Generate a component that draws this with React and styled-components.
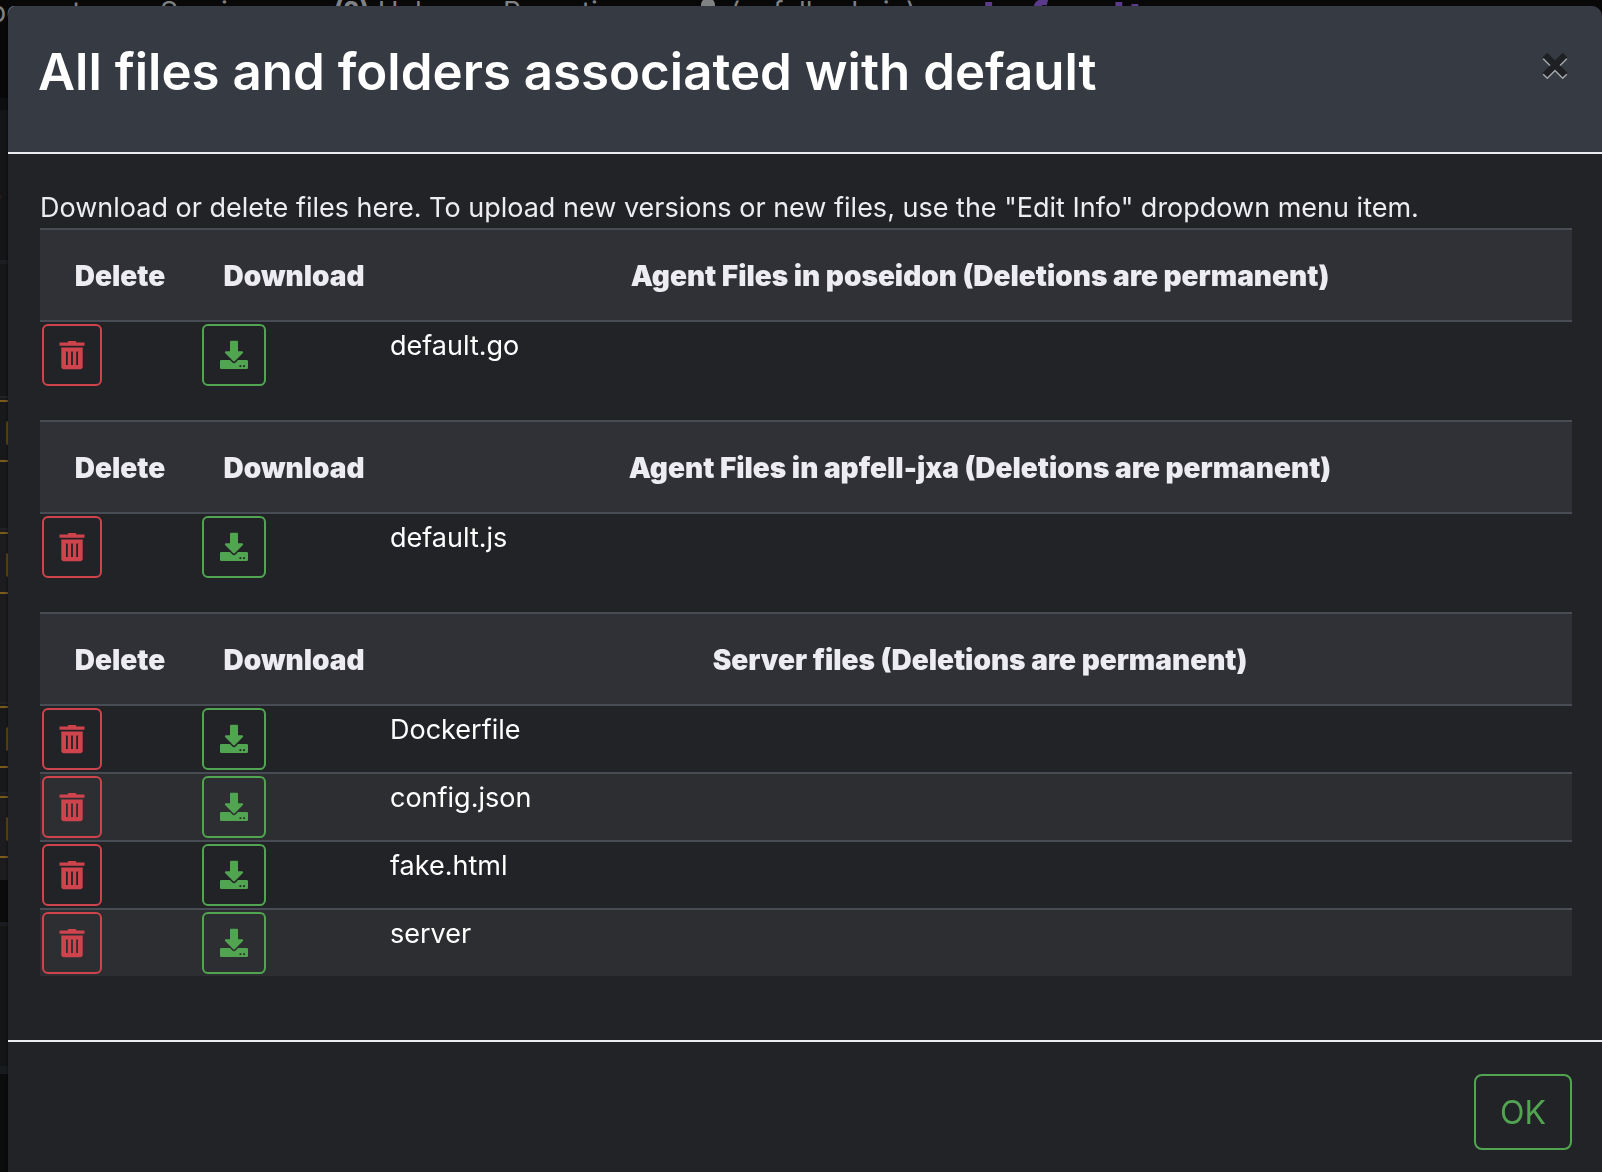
import React from "react";
import styled, { createGlobalStyle, css } from "styled-components";
import { FaUser } from "react-icons/fa";

const GlobalStyle = createGlobalStyle`
  *, *::before, *::after { box-sizing: border-box; }
  body {
    margin: 0;
    background: #0b0c0c;
    color: #ececf1;
    font: 400 27px/44px Inter, "Liberation Sans", sans-serif;
    overflow: hidden;
  }
`;

const Page = styled.div`
  color: #808183;
`;

const NavBar = styled.nav`
  display: flex;
  align-items: flex-start;
  gap: 64px;
  height: 98px;
  background: #080809;
  font-size: 28px;
  line-height: 24px;
  white-space: nowrap;
  overflow: hidden;
`;

const NavItem = styled.a`
  display: flex;
  gap: 8px;
  width: ${(p) => p.$width}px;
  height: 24px;
  align-items: center;
  flex: none;
  justify-content: ${(p) => (p.$end ? "flex-end" : "flex-start")};
  color: inherit;
  text-decoration: none;

  svg {
    flex: none;
  }
`;

const Operation = styled(NavItem)`
  height: 44px;
  color: #5b3a8a;
  font-size: 54px;
  font-weight: 600;
  line-height: 44px;
`;

const PageTitle = styled.div`
  display: flex;
  width: 2px;
  justify-content: flex-end;
  height: 144px;
  padding-top: 48px;
  font-size: 48px;
  font-weight: 500;
  line-height: 60px;
`;

const PageHead = styled.div`
  height: 166px;
  border-top: 12px solid #0d0e10;
  border-bottom: 4px solid #1c1d20;
  background: #141517;
`;

const Strip = styled.div`
  height: ${(p) => p.$height}px;
  background: ${(p) => p.$color};
`;

const PayloadRow = styled.div`
  height: ${(p) => p.$height}px;
  padding-top: 2px;
  border-top: 2px solid #212326;
  background: ${(p) => (p.$alt ? "#1c1c1e" : "#18191b")};
`;

const PayloadField = styled.div`
  height: 62px;
  padding: 19px 0 0 6px;
  border: solid #7b5b1c;
  border-width: 2px 0;
`;

const PayloadButton = styled.div`
  width: 60px;
  height: 24px;
  border-radius: 2px;
  background: #6b4c14;
`;

const Backdrop = styled.div`
  position: fixed;
  inset: 0;
  padding: 6px 0 0 6px;
`;

const Dialog = styled.section`
  display: flex;
  flex-direction: column;
  min-height: 100%;
  border-left: 2px solid rgba(0, 0, 0, 0.2);
  border-radius: 10px 10px 0 0;
  background: #222327;
  background-clip: padding-box;
  overflow: hidden;
`;

const DialogHeader = styled.header`
  display: flex;
  align-items: flex-start;
  justify-content: space-between;
  height: 148px;
  padding: 32px 34px 32px 30px;
  border-bottom: 2px solid #e9ecef;
  background: #363a42;
`;

const DialogTitle = styled.h1`
  margin: 0;
  color: #fff;
  font: 600 51px/68px Inter, "Liberation Sans", sans-serif;
`;

const CloseButton = styled.button`
  display: flex;
  padding: 14px 0 0;
  margin: 0;
  border: 0;
  background: none;
`;

const DialogBody = styled.div`
  padding: 34px 30px 64px 32px;
`;

const Intro = styled.p`
  margin: 0;
  line-height: 40px;
`;

const FileTable = styled.table`
  width: 100%;
  margin-bottom: ${(p) => (p.$last ? 0 : 32)}px;
  border-collapse: separate;
  border-spacing: 0;
  table-layout: fixed;
`;

const HeadCell = styled.th`
  width: ${(p) => p.$width};
  height: 92px;
  padding: 2px 0 0;
  border-top: 2px solid #484d55;
  background: #303136;
  font-size: 28px;
  font-weight: 900;
  text-align: center;
`;

const FileRow = styled.tr`
  background: ${(p) => (p.$striped ? "#2d2e32" : "transparent")};
`;

const Cell = styled.td`
  height: 68px;
  padding: 2px;
  border-top: 2px solid #484d55;
  color: #fff;
  vertical-align: top;
`;

const outline = css`
  border: 2px solid currentColor;
  background: transparent;
  font-family: inherit;
`;

const IconButton = styled.button`
  ${outline}
  display: flex;
  align-items: center;
  justify-content: center;
  width: ${(p) => (p.$tone === "danger" ? 60 : 64)}px;
  height: 62px;
  padding: 0;
  border-radius: 6px;
  color: ${(p) => (p.$tone === "danger" ? "#cf444c" : "#51a551")};
`;

const DialogFooter = styled.footer`
  display: flex;
  justify-content: flex-end;
  flex: 1;
  align-items: flex-start;
  padding: 32px 30px;
  border-top: 2px solid #e9ecef;
`;

const OkButton = styled.button`
  ${outline}
  width: 98px;
  height: 76px;
  padding: 0;
  border-radius: 8px;
  color: #51a551;
  font-size: 32px;
`;

const TrashIcon = () => (
  <svg width="26" height="30" viewBox="0 0 26 30" aria-hidden="true">
    <path
      fill="currentColor"
      fillRule="evenodd"
      d="M1 2.5h7.500l1-1.500h7l1 1.500H25a.5.5 0 0 1 .5.5v2.200a.5.5 0 0 1-.5.5H1a.5.5 0 0 1-.5-.5V3a.5.5 0 0 1 .5-.5zM2.300 7.500h21.400v19a2.800 2.800 0 0 1-2.800 2.800H5.100a2.800 2.800 0 0 1-2.800-2.800zM7 11.500v13.500h1.800V11.500zm5.100 0v13.500h1.800V11.500zm5.100 0v13.500H19V11.500z"
    />
  </svg>
);

const DownloadIcon = () => (
  <svg width="28" height="30" viewBox="0 0 28 30" aria-hidden="true">
    <path
      fill="currentColor"
      d="M11 .7h6a1 1 0 0 1 1 1v9.600h4.200a1 1 0 0 1 .7 1.700l-7.900 8a1.400 1.400 0 0 1-2 0l-7.900-8a1 1 0 0 1 .7-1.700H10V1.700a1 1 0 0 1 1-1z"
    />
    <path
      fill="currentColor"
      fillRule="evenodd"
      d="M1.300 20h8.700l2.100 2.200a2.700 2.700 0 0 0 3.800 0L18 20h8.700A1.300 1.300 0 0 1 28 21.300v6.400a1.300 1.300 0 0 1-1.300 1.300H1.300A1.300 1.300 0 0 1 0 27.700v-6.400A1.300 1.300 0 0 1 1.300 20zM19.500 25.300v1.800h1.800v-1.800zm3.600 0v1.800h1.800v-1.800z"
    />
  </svg>
);

const CloseIcon = () => (
  <svg width="26" height="28" viewBox="0 0 26 28" aria-hidden="true">
    <g strokeWidth="6.500" fill="none">
      <path stroke="#a5a8ac" d="M3 5l20 20M23 5L3 25" />
      <path stroke="#1e2024" d="M3 3l20 20M23 3L3 23" />
    </g>
  </svg>
);

const groups = [
  { title: "Agent Files in poseidon (Deletions are permanent)", files: ["default.go"] },
  { title: "Agent Files in apfell-jxa (Deletions are permanent)", files: ["default.js"] },
  {
    title: "Server files (Deletions are permanent)",
    files: ["Dockerfile", "config.json", "fake.html", "server"],
  },
];

const payloads = [
  { height: 132 },
  { height: 174, alt: true },
  { height: 90 },
  { height: 88, alt: true },
];

function FileGroup({ title, files, last }) {
  return (
    <FileTable $last={last}>
      <thead>
        <tr>
          <HeadCell $width="160px">Delete</HeadCell>
          <HeadCell $width="188px">Download</HeadCell>
          <HeadCell $width="auto">{title}</HeadCell>
        </tr>
      </thead>
      <tbody>
        {files.map((file, i) => (
          <FileRow key={file} $striped={i % 2 === 1}>
            <Cell>
              <IconButton type="button" $tone="danger" aria-label={`Delete ${file}`}>
                <TrashIcon />
              </IconButton>
            </Cell>
            <Cell>
              <IconButton type="button" $tone="success" aria-label={`Download ${file}`}>
                <DownloadIcon />
              </IconButton>
            </Cell>
            <Cell>{file}</Cell>
          </FileRow>
        ))}
      </tbody>
    </FileTable>
  );
}

export default function App() {
  return (
    <>
      <GlobalStyle />
      <Page aria-hidden="true">
        <NavBar>
          <NavItem href="#" $end $width={96}>Components</NavItem>
          <NavItem href="#" $width={109}>Services</NavItem>
          <NavItem href="#" $width={106}><b>(?)</b>Help</NavItem>
          <NavItem href="#" $width={127}>Reporting</NavItem>
          <NavItem href="#" $width={204}><FaUser size={28} />(apfell_admin)</NavItem>
          <Operation href="#" $width={200}>default</Operation>
        </NavBar>
        <PageHead>
          <PageTitle>s</PageTitle>
        </PageHead>
        <Strip $height={132} $color="#161719" />
        {payloads.map((p, i) => (
          <PayloadRow key={i} $height={p.height} $alt={p.alt}>
            <PayloadField>
              <PayloadButton />
            </PayloadField>
          </PayloadRow>
        ))}
        <Strip $height={42} $color="#0b0b0c" />
        <Strip $height={4} $color="#1a1c20" />
        <Strip $height={140} $color="#141517" />
        <Strip $height={8} $color="#181b1e" />
      </Page>
      <Backdrop>
        <Dialog role="dialog" aria-modal="true" aria-labelledby="dialog-title">
          <DialogHeader>
            <DialogTitle id="dialog-title">All files and folders associated with default</DialogTitle>
            <CloseButton type="button" aria-label="Close">
              <CloseIcon />
            </CloseButton>
          </DialogHeader>
          <DialogBody>
            <Intro>
              Download or delete files here. To upload new versions or new files, use the "Edit
              Info" dropdown menu item.
            </Intro>
            {groups.map((g, i) => (
              <FileGroup key={g.title} {...g} last={i === groups.length - 1} />
            ))}
          </DialogBody>
          <DialogFooter>
            <OkButton type="button">OK</OkButton>
          </DialogFooter>
        </Dialog>
      </Backdrop>
    </>
  );
}
